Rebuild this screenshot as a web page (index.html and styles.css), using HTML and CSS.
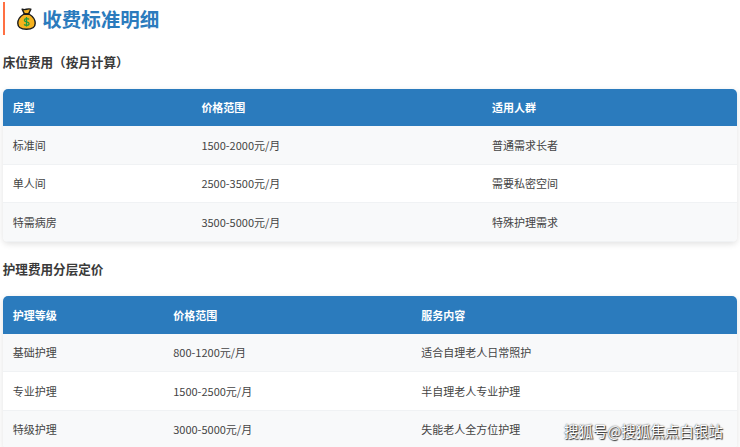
FILE: index.html
```html
<!DOCTYPE html>
<html lang="zh-CN">
<head>
<meta charset="utf-8">
<title>收费标准明细</title>
<link rel="stylesheet" href="styles.css">
</head>
<body>
<main class="page">
  <h2 class="title">
    <svg class="bag" viewBox="0 0 24 28" aria-hidden="true">
      <path d="M6.500 1.500c2 1.200 3.500.8 5.500.2 2-.6 3.500-.6 5.500-.2l-3 6.300h-5z" fill="#f5b21e" stroke="#1c1c1c" stroke-width="1.800" stroke-linejoin="round"/>
      <path d="M8.500 8C3.500 11 1 15.500 1 19.500 1 24.500 5.500 27 12 27s11-2.500 11-7.500C23 15.500 20.500 11 15.500 8z" fill="#f5b21e" stroke="#1c1c1c" stroke-width="1.800" stroke-linejoin="round"/>
      <path d="M8.500 7.800h7" stroke="#1c1c1c" stroke-width="2.200"/>
      <path d="M15.300 14.500c-1-1.200-5.800-1.500-6 1 0 3 6.200 1.500 6 4.700-.2 2.500-5.300 2.200-6.300.6M12 11.500v12" fill="none" stroke="#1e9b3c" stroke-width="1.600"/>
    </svg>
    <span>收费标准明细</span>
  </h2>
  <h3 class="sub sub-first">床位费用（按月计算）</h3>
  <table class="fee beds">
    <thead><tr><th>房型</th><th>价格范围</th><th>适用人群</th></tr></thead>
    <tbody>
      <tr><td>标准间</td><td>1500-2000元/月</td><td>普通需求长者</td></tr>
      <tr><td>单人间</td><td>2500-3500元/月</td><td>需要私密空间</td></tr>
      <tr><td>特需病房</td><td>3500-5000元/月</td><td>特殊护理需求</td></tr>
    </tbody>
  </table>
  <h3 class="sub sub-second">护理费用分层定价</h3>
  <table class="fee care">
    <thead><tr><th>护理等级</th><th>价格范围</th><th>服务内容</th></tr></thead>
    <tbody>
      <tr><td>基础护理</td><td>800-1200元/月</td><td>适合自理老人日常照护</td></tr>
      <tr><td>专业护理</td><td>1500-2500元/月</td><td>半自理老人专业护理</td></tr>
      <tr><td>特级护理</td><td>3000-5000元/月</td><td>失能老人全方位护理</td></tr>
    </tbody>
  </table>
</main>
<div class="mark">搜狐号@搜狐焦点白银站</div>
</body>
</html>
```
FILE: styles.css
```css
* { box-sizing: border-box; }
html, body { margin: 0; height: 447px; overflow: hidden; background: #fff; }
body { font-family: "Noto Sans CJK SC", "Noto Sans", sans-serif; color: #444; position: relative; }
.page { padding: 2px 3px 0 2.700px; }
.title {
  margin: 0;
  height: 33px;
  display: flex;
  align-items: center;
  gap: 6.500px;
  padding-left: 12px;
  border-left: 2.700px solid #ff7043;
  font-size: 19.500px;
  font-weight: 700;
  color: #2b7bbd;
}
.bag { width: 19px; height: 24px; flex: none; }
.sub { margin: 0; font-size: 12.600px; line-height: 18px; font-weight: 700; color: #3a3a3a; }
.sub-first { padding-top: 18px; }
.sub-second { padding-top: 18px; }
.fee {
  width: 734.300px;
  table-layout: fixed;
  border-collapse: separate;
  border-spacing: 0;
  border-radius: 5px;
  overflow: hidden;
  box-shadow: 0 2px 6px rgba(0,0,0,.12);
  font-size: 11px;
}
.beds { margin-top: 18px; }
.care { margin-top: 18px; }
.fee th {
  height: 37px;
  padding: 0 10px;
  text-align: left;
  font-weight: 700;
  color: #fff;
  background: #2b7bbd;
}
.beds th { padding-bottom: 1px; }
.care th { height: 38px; }
.fee td {
  height: 38.500px;
  padding: 0 10px;
  color: #444;
  background: #fff;
  border-bottom: 1px solid #f0f2f4;
}
.fee tbody tr:nth-child(odd) td { background: #f8f9fa; }
.beds th:nth-child(1) { width: 188.700px; }
.beds th:nth-child(2) { width: 290.700px; }
.care th:nth-child(1) { width: 160.500px; }
.care th:nth-child(2) { width: 248px; }
.mark {
  position: absolute;
  left: 564px;
  top: 422px;
  font-size: 14.500px;
  line-height: 18px;
  color: #fff;
  text-shadow: 0 0 1.500px #222, 1px 1px 1px #333;
  white-space: nowrap;
}
```
